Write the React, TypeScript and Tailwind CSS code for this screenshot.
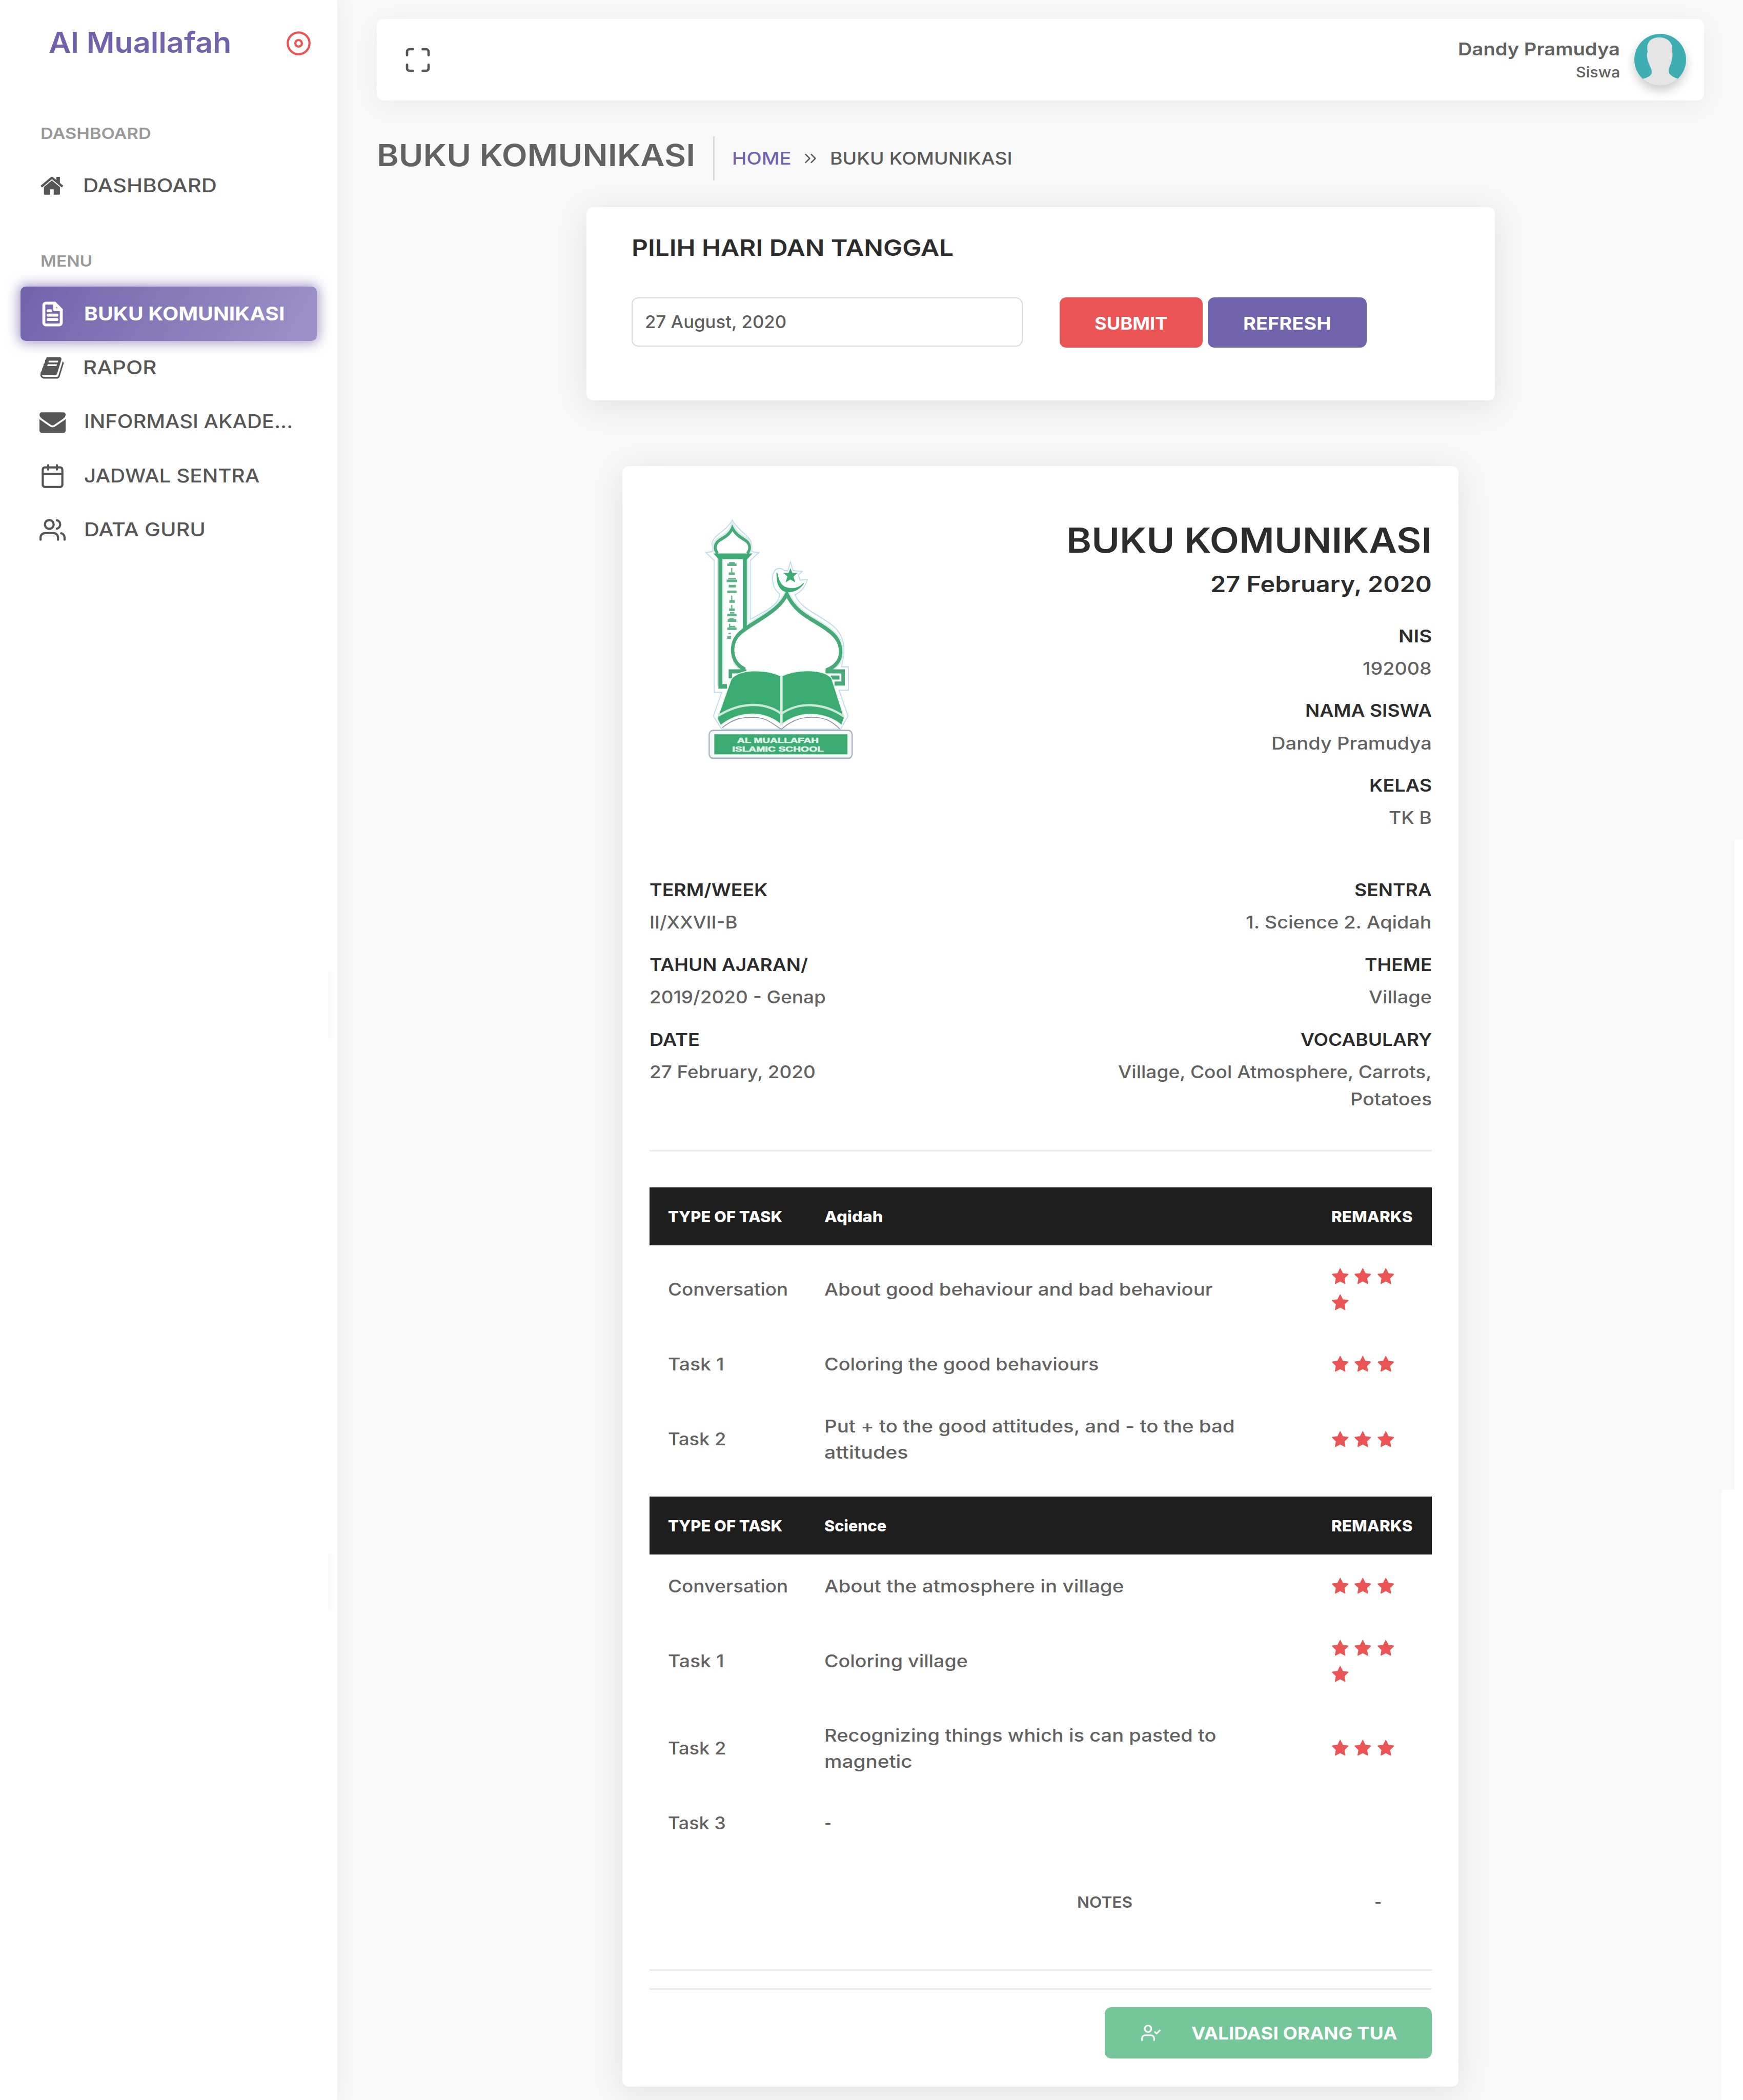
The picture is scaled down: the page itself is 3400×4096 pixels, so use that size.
import { useLayoutEffect, useRef } from "react";
import type { ReactNode } from "react";
import clsx from "clsx";

/** One line of text whose glyphs are widened or narrowed to span `w` pixels. */
function T({ children, w, className }: { children: string; w: number; className?: string }) {
  const ref = useRef<HTMLSpanElement>(null);
  useLayoutEffect(() => {
    const el = ref.current;
    if (!el) return;
    el.style.transform = `scaleX(${w / el.offsetWidth})`;
  }, [children, w]);
  return (
    <span className={clsx("inline-block shrink-0 whitespace-pre", className)} style={{ width: w }}>
      <span ref={ref} className="inline-block origin-left">
        {children}
      </span>
    </span>
  );
}

function Feather({ children, className, sw = 2 }: { children: ReactNode; className?: string; sw?: number }) {
  return (
    <svg
      viewBox="0 0 24 24"
      fill="none"
      stroke="currentColor"
      strokeWidth={sw}
      strokeLinecap="round"
      strokeLinejoin="round"
      className={clsx("shrink-0", className)}
    >
      {children}
    </svg>
  );
}

function Solid({ d, className }: { d: string; className?: string }) {
  return (
    <svg viewBox="0 0 1792 1792" fill="currentColor" className={clsx("shrink-0", className)}>
      <path d={d} />
    </svg>
  );
}

const HOME =
  "M1472 992v480q0 26-19 45t-45 19h-384v-384h-256v384h-384q-26 0-45-19t-19-45v-480q0-1 .5-3t.5-3l575-474 575 474q1 2 1 6zm223-69l-62 74q-8 9-21 11h-3q-13 0-21-7l-692-577-692 577q-12 8-24 7-13-2-21-11l-62-74q-8-10-7-23.500t11-21.500l719-599q32-26 76-26t76 26l244 204v-195q0-14 9-23t23-9h192q14 0 23 9t9 23v408l219 182q10 8 11 21.500t-7 23.500z";
const BOOK =
  "M1703 478q40 57 18 129l-275 906q-19 64-76.500 107.500t-122.500 43.500h-923q-77 0-148.500-53.500t-99.500-131.500q-24-67-2-127 0-4 3-27t4-37q1-8-3-21.500t-3-19.500q2-11 8-21t16.500-23.500 16.500-23.500q23-38 45-91.500t30-91.500q3-10 .5-30t-.5-28q3-11 17-28t17-23q21-36 42-92t25-90q1-9-2.500-32t.5-28q4-13 22-30.500t22-22.500q19-26 42.500-84.500t27.500-96.500q1-8-3-25.500t-2-26.500q2-8 9-18t18-23 17-21q8-12 16.500-30.500t15-35 16-36 19.500-32 26.500-23.500 36-11.500 47.500 5.500l-1 3q38-9 51-9h761q74 0 114 56t18 130l-274 906q-36 119-71.500 153.500t-128.500 34.500h-869q-27 0-38 15-11 16-1 43 24 70 144 70h923q29 0 56-15.500t35-41.500l300-987q7-22 5-57 38 15 59 43zm-1064 2q-4 13 2 22.500t20 9.500h608q13 0 25.500-9.500t16.500-22.500l21-64q4-13-2-22.500t-20-9.500h-608q-13 0-25.500 9.500t-16.500 22.500zm-83 256q-4 13 2 22.500t20 9.500h608q13 0 25.500-9.500t16.500-22.500l21-64q4-13-2-22.500t-20-9.500h-608q-13 0-25.500 9.500t-16.500 22.500z";
const ENVELOPE =
  "M1792 710v794q0 66-47 113t-113 47h-1472q-66 0-113-47t-47-113v-794q44 49 101 87 362 246 497 345 57 42 92.500 65.500t94.500 48 110 24.500h2q51 0 110-24.500t94.500-48 92.500-65.500q170-123 498-345 57-39 100-87zm0-294q0 79-49 151t-122 123q-376 261-468 325-10 7-42.500 31t-54 38.800-52 32.500-57.500 27-50 9h-2q-23 0-50-9t-57.500-27-52-32.500-54-38.800-42.500-31q-91-64-262-182.500t-205-142.500q-62-42-117-115.500t-55-136.500q0-78 41.500-130t118.500-52h1472q65 0 112.500 47t47.500 113z";
const STAR =
  "M1728 647q0 22-26 48l-363 354 86 500q1 7 1 20 0 21-10.500 35.500t-30.500 14.500q-19 0-40-12l-449-236-449 236q-22 12-40 12-21 0-31.500-14.500t-10.500-35.500q0-6 2-20l86-500-364-354q-25-27-25-48 0-37 56-46l502-73 225-455q19-41 49-41t49 41l225 455 502 73q56 9 56 46z";

function NavItem({ icon, label, w, active }: { icon: ReactNode; label: string; w: number; active?: boolean }) {
  return (
    <div
      className={clsx(
        "mx-[40px] flex h-[105.4px] items-center gap-[36px] pl-[37px] text-[36.5px]",
        active
          ? "rounded-[10px] bg-linear-[118deg,#7163ab,#9d92c8] font-bold text-white shadow-[0_0_25px_2.5px_rgba(115,101,172,0.7)]"
          : "font-medium text-[#565656]",
      )}
    >
      {icon}
      <T w={w}>{label}</T>
    </div>
  );
}

function Sidebar() {
  return (
    <aside className="relative z-10 flex w-[658px] shrink-0 flex-col bg-white shadow-[0_0_38px_rgba(0,0,0,0.06)]">
      <div className="flex h-[165px] items-center justify-between pr-[50px] pl-[95px]">
        <T w={356} className="text-[57px] font-semibold text-[#7163ab]">
          Al Muallafah
        </T>
        <Feather className="size-[51px] translate-y-[2px] text-[#ea5455]">
          <circle cx="12" cy="12" r="10" />
          <circle cx="12" cy="12" r="3" />
        </Feather>
      </div>
      <div className="mt-[45px] flex h-[100px] items-center pl-[79px] text-[30.5px] font-semibold text-[#999]">
        <T w={216}>DASHBOARD</T>
      </div>
      <NavItem label="DASHBOARD" w={261} icon={<Solid d={HOME} className="size-[48.6px]" />} />
      <div className="mt-[42px] flex h-[102px] items-center pl-[79px] text-[30.5px] font-semibold text-[#999]">
        <T w={101}>MENU</T>
      </div>
      <NavItem
        active
        label="BUKU KOMUNIKASI"
        w={391}
        icon={
          <Feather className="size-[51px]" sw={2.7}>
            <path d="M14 2H6a2 2 0 0 0-2 2v16a2 2 0 0 0 2 2h12a2 2 0 0 0 2-2V8z" />
            <path d="M14 2v6h6M16 13H8M16 17H8M10 9H8" />
          </Feather>
        }
      />
      <NavItem label="RAPOR" w={144} icon={<Solid d={BOOK} className="size-[49px]" />} />
      <NavItem label="INFORMASI AKADE..." w={407} icon={<Solid d={ENVELOPE} className="size-[51px]" />} />
      <NavItem
        label="JADWAL SENTRA"
        w={342}
        icon={
          <Feather className="size-[51px]">
            <rect x="3" y="4" width="18" height="18" rx="2" />
            <path d="M16 2v4M8 2v4M3 10h18" />
          </Feather>
        }
      />
      <NavItem
        label="DATA GURU"
        w={237}
        icon={
          <Feather className="size-[51px]">
            <path d="M17 21v-2a4 4 0 0 0-4-4H5a4 4 0 0 0-4 4v2" />
            <circle cx="9" cy="7" r="4" />
            <path d="M23 21v-2a4 4 0 0 0-3-3.870M16 3.130a4 4 0 0 1 0 7.750" />
          </Feather>
        }
      />
      <div className="absolute top-[1895px] right-[4px] h-[130px] w-[14px] bg-linear-to-r from-[#f9f9f9] to-white" />
      <div className="absolute top-[3030px] right-[4px] h-[110px] w-[14px] bg-linear-to-r from-[#f9f9f9] to-white" />
    </aside>
  );
}

function Avatar() {
  return (
    <div className="size-[101px] overflow-hidden rounded-full shadow-[0_10px_20px_rgba(0,0,0,0.2)]">
      <svg viewBox="0 0 100 100" className="size-full">
        <rect width="100" height="100" fill="#3faeb2" />
        <path
          d="M48 7C33 7 25 15 25 27c0 3 .5 6 1 8-2 2-2 7-1 12 1 7 4 12 6 17 3 6 3 10 2 13-2 5-9 8-17 10v15h70V87c-8-2-14-5-17-9-3-3-3-9-1-14 2-5 4-10 5-17 1-5 1-10 0-13 .5-2 0-5 0-8C72 15 63 7 48 7z"
          fill="#e5e5e5"
        />
      </svg>
    </div>
  );
}

function Topbar() {
  return (
    <header className="mt-[37px] flex h-[159px] items-center rounded-[13px] bg-white pr-[35px] pl-[52px] shadow-[0_10px_50px_rgba(0,0,0,0.05)]">
      <Feather className="size-[56px] text-[#565656]">
        <path d="M8 3H5a2 2 0 0 0-2 2v3m18 0V5a2 2 0 0 0-2-2h-3m0 18h3a2 2 0 0 0 2-2v-3M3 16v3a2 2 0 0 0 2 2h3" />
      </Feather>
      <div className="mr-[28px] ml-auto flex flex-col items-end pt-[2px] text-[#626262]">
        <T w={316} className="text-[34.5px] leading-[45px] font-semibold">
          Dandy Pramudya
        </T>
        <T w={86} className="text-[29px] leading-[45px] font-medium">
          Siswa
        </T>
      </div>
      <Avatar />
    </header>
  );
}

function Breadcrumb() {
  return (
    <div className="mt-[70px] flex h-[86px] items-center text-[34.5px] font-medium text-[#5a5a5a]">
      <T w={621} className="pb-[12px] text-[59px] font-semibold text-[#626262]">
        BUKU KOMUNIKASI
      </T>
      <div className="ml-[35px] h-full w-[3px] bg-[#d9d9d9]" />
      <T w={115} className="ml-[34px] text-[#7163ab]">
        HOME
      </T>
      <Feather className="mr-[19px] ml-[19px] size-[38px]" sw={1.6}>
        <path d="M13 17l5-5-5-5M6 17l5-5-5-5" />
      </Feather>
      <T w={356}>BUKU KOMUNIKASI</T>
    </div>
  );
}

function DatePicker() {
  return (
    <section className="mx-auto mt-[52px] h-[377px] w-[1772px] rounded-[13px] bg-white pt-[49px] pl-[88px] shadow-[0_10px_63px_rgba(0,0,0,0.1)]">
      <div className="flex h-[60px] items-center text-[44px] font-semibold text-[#2c2c2c]">
        <T w={628}>PILIH HARI DAN TANGGAL</T>
      </div>
      <div className="mt-[67px] flex items-start">
        <div className="flex h-[96px] w-[763px] items-center rounded-[13px] border-[2.5px] border-[#d9d9d9] pl-[24px] text-[34.5px] font-medium text-[#5f5f5f]">
          <T w={276}>27 August, 2020</T>
        </div>
        <div className="ml-[72px] flex h-[98px] w-[279px] items-center justify-center rounded-[13px] bg-[#ea5455] pt-[2px] text-[34px] font-bold text-white">
          <T w={143}>SUBMIT</T>
        </div>
        <div className="ml-[10px] flex h-[98px] w-[310px] items-center justify-center rounded-[13px] bg-[#7163ab] pt-[2px] text-[34px] font-bold text-white">
          <T w={172}>REFRESH</T>
        </div>
      </div>
    </section>
  );
}

function SchoolLogo() {
  const dome = "M410 950C350 925 325 880 328 830C333 770 370 745 420 715C520 655 640 610 688 520C750 640 870 665 960 725C1020 762 1045 800 1046 850C1045 900 1010 935 950 955";
  const cap = "M228 290C200 260 212 232 240 215C280 195 310 180 326 145C345 180 375 195 412 215C442 232 452 262 425 290";
  return (
    <svg viewBox="140 90 1000 1380" preserveAspectRatio="none" className="h-[473px] w-[293.5px]" fill="none">
      <path
        d="M150 284C200 280 200 285 190 235C200 180 280 170 326 100C370 170 450 190 455 240C448 285 460 284 502 284L445 330V665L560 610C620 575 640 550 640 520C590 490 580 420 610 385C630 370 655 372 672 388H695L712 338L730 388L790 392L765 412L775 442L825 438C810 480 780 510 742 525C780 600 860 620 960 680C1050 730 1095 800 1050 935H1097V1068H1035L1095 1215L1045 1290H255L200 1215L255 1080H205V330Z"
        fill="#fff"
        stroke="#bcdcf0"
        strokeWidth="6"
      />
      <path
        d="M258 1282C340 1225 400 1222 470 1222C560 1225 600 1265 652 1290C700 1255 760 1222 850 1222C940 1222 980 1240 1040 1288"
        stroke="#8f93a3"
        strokeWidth="5"
      />
      <g stroke="#d9ecea" strokeWidth="40">
        <path d={cap} />
        <path d={dome} />
        <path d="M245 300V1045M412 300V715" />
      </g>
      <path d="M265 325H395V720L330 780V950H300V1030H265Z" fill="#fff" />
      <path d={dome} fill="#fff" />
      <path d={cap} fill="#fff" />
      <g stroke="#45aa78" strokeWidth="23">
        <path d={cap} strokeWidth="18" />
        <path d={dome} />
        <path d="M246 300V1046H290M409 300V715" strokeWidth="26" />
        <path d="M420 961H313V1000M945 961H1062V1030H1005" />
        <path d="M980 996H1038" />
      </g>
      <path d="M200 290H460L425 322H235Z" fill="#3bab72" />
      <g stroke="#5fb48a" strokeWidth="15">
        <path d="M292 354H354M302 405H342M288 446H358M302 476H350M292 508H354M306 563H342M304 610H342M292 640H354M295 672H352M292 718H354M292 768H318" />
        <path d="M304 343H342M322 372V405M298 434H350M322 530V563M322 582V610M310 628H340M306 662H335M308 690V715M308 706H345M300 745H316" strokeWidth="8" />
      </g>
      <path d="M622 400C618 470 650 510 700 508C745 508 780 485 800 460C770 485 735 495 700 488C650 482 635 450 622 400Z" fill="#3bab72" stroke="#3bab72" strokeWidth="5" />
      <path d="M712 374L725 401L759 401L732 421L744 455L712 438L680 455L692 421L665 401L699 401Z" fill="#3bab72" />
      <path d="M318 1005C370 948 540 943 652 988C760 943 930 948 985 998L1070 1225L1052 1268C960 1198 780 1173 652 1265C530 1178 370 1188 248 1268L225 1230Z" fill="#3bab72" stroke="#e9f5ef" strokeWidth="6" />
      <path d="M652 985V1270" stroke="#d7efe2" strokeWidth="16" />
      <path d="M235 1212C380 1135 540 1132 652 1202C770 1132 930 1137 1068 1218" stroke="#c9ead8" strokeWidth="13" />
      <rect x="172" y="1297" width="950" height="158" rx="24" fill="#f3f7f6" stroke="#a9b3bd" strokeWidth="8" />
      <rect x="206" y="1319" width="885" height="114" fill="#3bab72" />
      <g fill="#dff3e9" stroke="#dff3e9" strokeWidth="2" fontFamily="Liberation Sans, sans-serif" fontWeight="700" fontSize="41">
        <text x="358" y="1368" textLength="542" lengthAdjust="spacingAndGlyphs">
          AL MUALLAFAH
        </text>
        <text x="325" y="1417" textLength="608" lengthAdjust="spacingAndGlyphs">
          ISLAMIC SCHOOL
        </text>
      </g>
    </svg>
  );
}

type Line = [text: string, width: number];

function Field({ label, lines, right }: { label: Line; lines: Line[]; right?: boolean }) {
  return (
    <div className={clsx("flex flex-col text-[34px]", right ? "items-end" : "items-start")}>
      <div className="flex h-[63.3px] items-center font-semibold text-[#2c2c2c]">
        <T w={label[1]}>{label[0]}</T>
      </div>
      <div className={clsx("flex flex-col py-[5px] leading-[53px] font-medium text-[#626262]", right ? "items-end" : "items-start")}>
        {lines.map(([text, w]) => (
          <T key={text} w={w}>
            {text}
          </T>
        ))}
      </div>
    </div>
  );
}

function Stars({ n }: { n: number }) {
  return (
    <div className="flex w-[140px] translate-y-[1px] flex-wrap text-[#ea5455]">
      {Array.from({ length: n }, (_, i) => (
        <div key={i} className="flex h-[51px] w-[44.4px] items-center">
          <Solid d={STAR} className="size-[34.5px]" />
        </div>
      ))}
    </div>
  );
}

type Row = { task: Line; lines: Line[]; stars: number };

function TaskTable({ subject, rows }: { subject: Line; rows: Row[] }) {
  return (
    <div className="w-full">
      <div className="grid h-[113px] grid-cols-[305px_989px_1fr] items-center bg-[#1e1e1e] pl-[36px] text-[30.5px] font-extrabold text-white">
        <T w={223}>TYPE OF TASK</T>
        <T w={subject[1]}>{subject[0]}</T>
        <T w={159}>REMARKS</T>
      </div>
      {rows.map((r) => (
        <div
          key={r.task[0]}
          className={clsx(
            "grid grid-cols-[305px_989px_1fr] items-center pl-[36px] text-[34px] leading-[51px] font-medium text-[#626262]",
            r.lines.length > 1 || r.stars > 3 ? "h-[170px]" : "h-[122.6px]",
          )}
        >
          <T w={r.task[1]}>{r.task[0]}</T>
          <div className="flex flex-col items-start">
            {r.lines.map(([text, w]) => (
              <T key={text} w={w}>
                {text}
              </T>
            ))}
          </div>
          <Stars n={r.stars} />
        </div>
      ))}
    </div>
  );
}

const AQIDAH: Row[] = [
  { task: ["Conversation", 234], lines: [["About good behaviour and bad behaviour", 758]], stars: 4 },
  { task: ["Task 1", 110], lines: [["Coloring the good behaviours", 535]], stars: 3 },
  { task: ["Task 2", 113], lines: [["Put + to the good attitudes, and - to the bad", 800], ["attitudes", 163]], stars: 3 },
];

const SCIENCE: Row[] = [
  { task: ["Conversation", 234], lines: [["About the atmosphere in village", 584]], stars: 3 },
  { task: ["Task 1", 110], lines: [["Coloring village", 280]], stars: 4 },
  { task: ["Task 2", 113], lines: [["Recognizing things which is can pasted to", 765], ["magnetic", 172]], stars: 3 },
  { task: ["Task 3", 113], lines: [["-", 14]], stars: 0 },
];

function Report() {
  return (
    <section className="mx-auto mt-[128px] flex h-[3161px] w-[1631px] shrink-0 flex-col rounded-[13px] bg-white pr-[52px] pl-[53px] pt-[99px] shadow-[0_10px_63px_rgba(0,0,0,0.1)]">
      <div className="flex items-start justify-between">
        <div className="mt-[3px] ml-[107px]">
          <SchoolLogo />
        </div>
        <div className="flex flex-col items-end text-[#2c2c2c]">
          <div className="flex h-[90px] items-center text-[68px] font-semibold">
            <T w={713}>BUKU KOMUNIKASI</T>
          </div>
          <div className="mb-[29px] flex h-[82px] items-center text-[44px] font-semibold">
            <T w={432}>27 February, 2020</T>
          </div>
          <div className="flex flex-col items-end gap-[19px]">
            <Field right label={["NIS", 65]} lines={[["192008", 135]]} />
            <Field right label={["NAMA SISWA", 247]} lines={[["Dandy Pramudya", 313]]} />
            <Field right label={["KELAS", 122]} lines={[["TK B", 84]]} />
          </div>
        </div>
      </div>
      <div className="mt-[78px] flex justify-between">
        <div className="flex flex-col gap-[19.8px]">
          <Field label={["TERM/WEEK", 230]} lines={[["II/XXVII-B", 171]]} />
          <Field label={["TAHUN AJARAN/", 309]} lines={[["2019/2020 - Genap", 344]]} />
          <Field label={["DATE", 98]} lines={[["27 February, 2020", 324]]} />
        </div>
        <div className="flex flex-col gap-[19.8px]">
          <Field right label={["SENTRA", 151]} lines={[["1. Science 2. Aqidah", 363]]} />
          <Field right label={["THEME", 131]} lines={[["Village", 123]]} />
          <Field right label={["VOCABULARY", 256]} lines={[["Village, Cool Atmosphere, Carrots,", 612], ["Potatoes", 159]]} />
        </div>
      </div>
      <div className="mt-[68px] h-[3px] bg-[#ebebeb]" />
      <div className="mt-[70px] flex flex-col gap-[27px]">
        <TaskTable subject={["Aqidah", 114]} rows={AQIDAH} />
        <TaskTable subject={["Science", 121]} rows={SCIENCE} />
      </div>
      <div className="flex h-[185px] items-center pl-[834px] text-[30.5px] font-semibold text-[#626262]">
        <T w={108}>NOTES</T>
        <span className="ml-[472px]">-</span>
      </div>
      <div className="mt-[39px] h-[3px] shrink-0 bg-[#e9e9e9]" />
      <div className="mt-[34px] h-[3px] shrink-0 bg-[#e9e9e9]" />
      <div className="mt-[34px] flex h-[100px] w-[638px] shrink-0 items-center self-end rounded-[13px] bg-[#75c699] pl-[71px] text-[34px] font-bold text-white">
        <Feather className="size-[38px]">
          <path d="M16 21v-2a4 4 0 0 0-4-4H5a4 4 0 0 0-4 4v2" />
          <circle cx="8.500" cy="7" r="4" />
          <path d="M17 11l2 2 4-4" />
        </Feather>
        <T w={401} className="ml-[60px]">
          VALIDASI ORANG TUA
        </T>
      </div>
    </section>
  );
}

export default function App() {
  return (
    <div className="relative flex h-[4096px] w-[3400px] overflow-hidden bg-[#f8f8f8] font-['Inter',sans-serif]">
      <Sidebar />
      <main className="flex flex-1 flex-col pr-[76px] pl-[77px]">
        <Topbar />
        <Breadcrumb />
        <DatePicker />
        <Report />
      </main>
      <div className="absolute right-0 bottom-0 h-[2459px] w-[17px] bg-white" />
      <div className="absolute right-0 bottom-0 h-[1191px] w-[42px] bg-white" />
    </div>
  );
}
